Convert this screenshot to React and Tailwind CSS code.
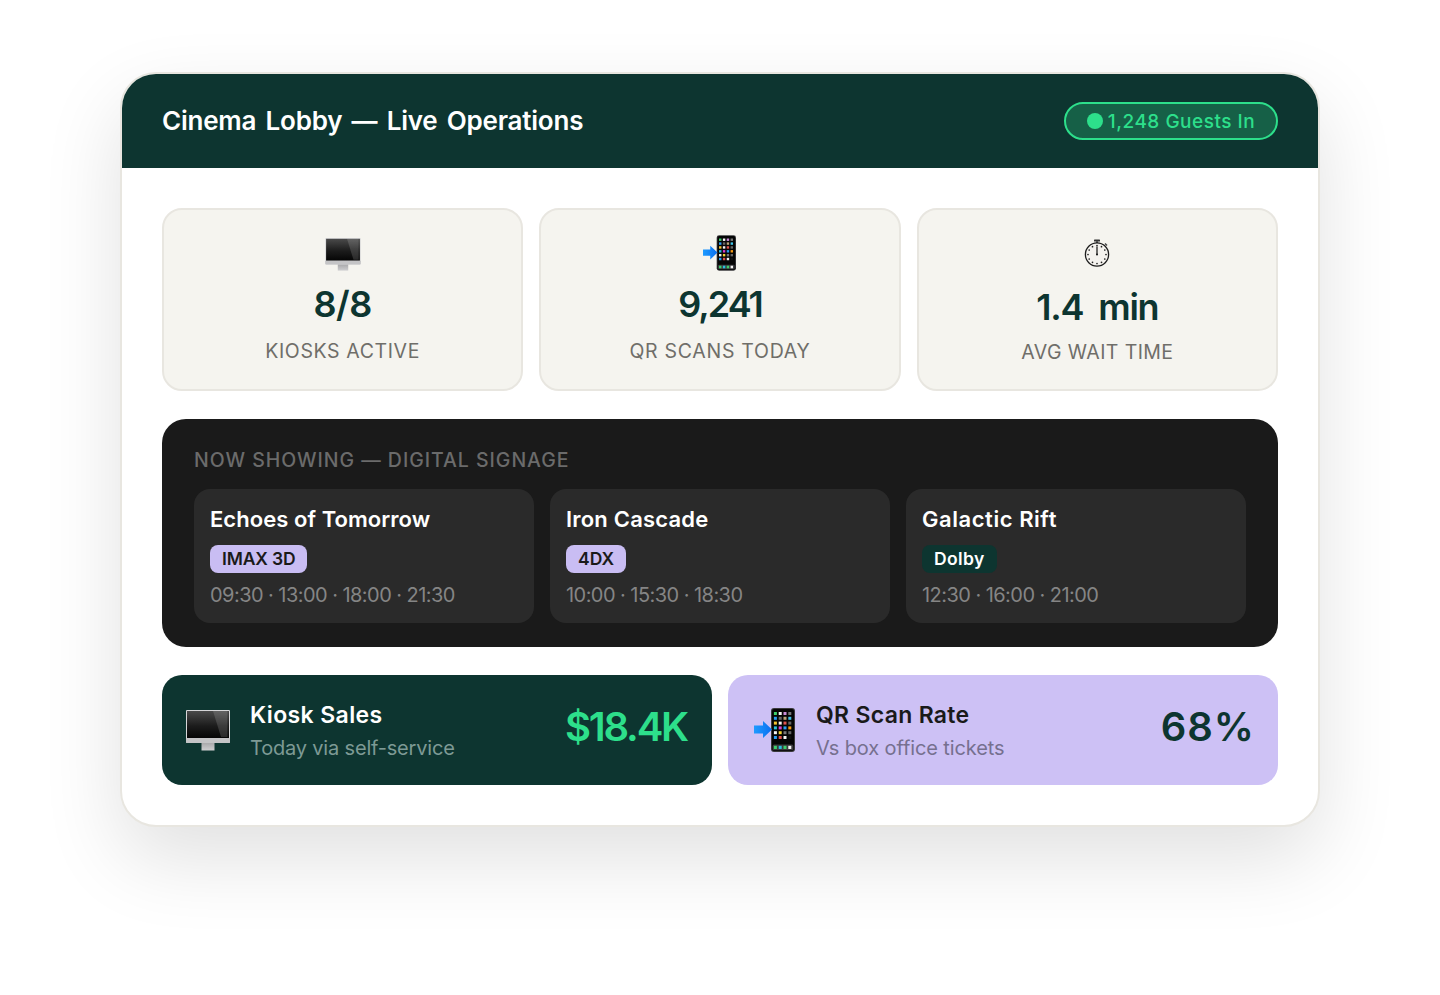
const sans = "font-['Inter','Liberation_Sans',sans-serif]";

function MonitorIcon({ className }) {
  return (
    <svg viewBox="0 0 44 41" className={className}>
      <defs>
        <linearGradient id="screen" x1="0" y1="0" x2="0" y2="1">
          <stop offset="0" stopColor="#4a4a4a" />
          <stop offset="0.55" stopColor="#1c1c1c" />
          <stop offset="1" stopColor="#050505" />
        </linearGradient>
        <linearGradient id="stand" x1="0" y1="0" x2="0" y2="1">
          <stop offset="0" stopColor="#9a9a9c" />
          <stop offset="1" stopColor="#cfcfd1" />
        </linearGradient>
      </defs>
      <rect x="15.5" y="30" width="13" height="10.5" fill="url(#stand)" />
      <rect x="0" y="0" width="44" height="33" rx="1" fill="#d6d6d8" />
      <rect x="0" y="28" width="44" height="5" rx="1" fill="#c4c4c6" />
      <rect x="1" y="1" width="42" height="27" fill="url(#screen)" />
      <path d="M27 1H41.5V27H35Z" fill="#fff" opacity="0.14" />
    </svg>
  );
}

const appColors = [
  "#3ecf6b", "#f5f5f5", "#c88bd8", "#777777",
  "#2a9df4", "#666666", "#b8a47a", "#3fc4e8",
  "#f4c430", "#f5f5f5", "#e0524d", "#666666",
  "#2ac0e0", "#d83fd0", "#2a9df4", "#f59a14",
  "#f5f5f5", "#f4d430", "#777777", "#666666",
  "#2a9df4", "#e0524d", "#f5f5f5", "#111111",
];
const dockColors = ["#3ecf6b", "#2ac0e0", "#3ecf6b", "#f5f5f5"];

function PhoneIcon({ className }) {
  return (
    <svg viewBox="0 0 41 44" className={className}>
      <defs>
        <linearGradient id="arrow" x1="0" y1="0" x2="1" y2="0">
          <stop offset="0" stopColor="#1e9bff" />
          <stop offset="1" stopColor="#0a6ff0" />
        </linearGradient>
      </defs>
      <rect x="17" y="0" width="24" height="44" rx="3" fill="#3a3a3c" />
      <rect x="18" y="1" width="22" height="42" rx="2.2" fill="#050505" />
      {appColors.map((c, i) => (
        <rect key={i} x={19.9 + (i % 4) * 4.8} y={4 + Math.floor(i / 4) * 4.8} width="3" height="3" fill={c} />
      ))}
      <rect x="18.6" y="36.6" width="20.8" height="5.6" rx="1.5" fill="#3a3a3c" />
      {dockColors.map((c, i) => (
        <rect key={i} x={19.9 + i * 4.8} y="37.8" width="3" height="3.2" fill={c} />
      ))}
      <path d="M0 17.5H9V13L18 21.5L9 30V25.5H0Z" fill="url(#arrow)" />
    </svg>
  );
}

function StopwatchIcon({ className }) {
  const ticks = Array.from({ length: 12 }, (_, i) => {
    const a = (i * Math.PI) / 6;
    return [13 + Math.sin(a) * 9, 15.5 - Math.cos(a) * 9];
  });
  return (
    <svg viewBox="0 0 26 28" className={className}>
      <rect x="10" y="0.5" width="6" height="2" rx="0.6" fill="#333" />
      <rect x="12" y="2" width="2" height="2" fill="#555" />
      <path d="M21 4.5L23 6.5" stroke="#444" strokeWidth="1.4" />
      <circle cx="13" cy="15.5" r="11.6" fill="#f4f2ee" stroke="#1d1d1d" strokeWidth="1.3" />
      {ticks.map(([x, y], i) => (
        <circle key={i} cx={x} cy={y} r="0.85" fill="#222" />
      ))}
      <path d="M13 7.5V15.5" stroke="#111" strokeWidth="1.2" />
      <circle cx="13" cy="15.5" r="1" fill="#111" />
    </svg>
  );
}

const stats = [
  { icon: <MonitorIcon className="w-9 h-[33px]" />, box: "h-[48px] pt-[9px]", value: "8/8", valueCls: "tracking-[-0.4px] mt-[5px]", label: "KIOSKS ACTIVE", labelCls: "tracking-[0.62px] mt-[11px]" },
  { icon: <PhoneIcon className="w-[33px] h-9" />, box: "h-[48px] pt-[6px]", value: "9,241", valueCls: "tracking-[-2px] mt-[5px]", label: "QR SCANS TODAY", labelCls: "tracking-[0.72px] mt-[11px]" },
  { icon: <StopwatchIcon className="w-[26px] h-[28px]" />, box: "h-[48px] pt-[10px]", value: "1.4 min", valueCls: "tracking-[-1.2px] [word-spacing:7px] mt-[8px]", label: "AVG WAIT TIME", labelCls: "tracking-[0.4px] mt-[9px]" },
];

const films = [
  { title: "Echoes of Tomorrow", titleCls: "tracking-[0.05px]", tag: "IMAX 3D", tagCls: "bg-[#c9bdf3] text-[#1a1a1a] tracking-[-0.15px]", times: "09:30 · 13:00 · 18:00 · 21:30" },
  { title: "Iron Cascade", titleCls: "tracking-[0.2px]", tag: "4DX", tagCls: "bg-[#c9bdf3] text-[#1a1a1a]", times: "10:00 · 15:30 · 18:30" },
  { title: "Galactic Rift", titleCls: "tracking-[0.55px]", tag: "Dolby", tagCls: "bg-[#0d3530] text-white tracking-[0.4px]", times: "12:30 · 16:00 · 21:00" },
];

export default function App() {
  return (
    <div className={`min-h-screen bg-white flex items-start justify-center pt-[72px] ${sans}`}>
      <div className="w-[1200px] rounded-[36px] border-2 border-[#e8e6e0] bg-white overflow-hidden shadow-[0_32px_80px_rgba(0,0,0,0.12)]">
        <div className="h-[94px] bg-[#0d3530] px-10 flex items-center justify-between">
          <h1 className="text-[26px] leading-[30px] mb-[1px] font-semibold text-white tracking-[-0.22px] [word-spacing:3px]">
            Cinema Lobby — Live Operations
          </h1>
          <div className="h-[38px] w-[214px] rounded-full border-2 border-[#2ddf8b] bg-[#166047] flex items-center justify-center gap-[5px] text-[#2ddf8b] text-[19px] font-medium">
            <span className="w-4 h-4 rounded-full bg-[#2ddf8b]" />
            <span className="tracking-[0.5px] translate-y-[1px]">1,248 Guests In</span>
          </div>
        </div>

        <div className="p-10 flex flex-col gap-7">
          <div className="grid grid-cols-3 gap-4">
            {stats.map((s) => (
              <div key={s.label} className="h-[183px] rounded-[20px] border-2 border-[#e8e6e0] bg-[#f5f4ef] flex flex-col items-center pt-[19px]">
                <div className={`flex justify-center ${s.box}`}>{s.icon}</div>
                <div className={`text-[36px] leading-[44px] font-semibold text-[#0d3530] ${s.valueCls}`}>{s.value}</div>
                <div className={`text-[19.5px] leading-[28px] text-[#6f6e69] ${s.labelCls}`}>{s.label}</div>
              </div>
            ))}
          </div>

          <div className="rounded-[24px] bg-[#1a1a1a] px-8 pt-[27px] pb-6">
            <div className="text-[19.5px] leading-[28px] font-medium text-[#6b6b6b] tracking-[0.97px]">NOW SHOWING — DIGITAL SIGNAGE</div>
            <div className="grid grid-cols-3 gap-4 mt-[15px]">
              {films.map((f) => (
                <div key={f.title} className="h-[134px] rounded-2xl bg-[#2a2a2a] px-4 pt-[16px]">
                  <div className={`text-[22px] leading-[28px] font-semibold text-white ${f.titleCls}`}>{f.title}</div>
                  <div className={`inline-block mt-[12px] h-7 px-3 rounded-lg text-[17.5px] leading-7 font-semibold ${f.tagCls}`}>{f.tag}</div>
                  <div className="mt-[8px] text-[20px] leading-[28px] text-[#858585] tracking-[-0.55px]">{f.times}</div>
                </div>
              ))}
            </div>
          </div>

          <div className="grid grid-cols-2 gap-4">
            <div className="h-[110px] rounded-[20px] bg-[#0d3530] pl-6 pr-[25px] flex items-center">
              <MonitorIcon className="w-11 h-[41px] shrink-0" />
              <div className="ml-5 flex-1 mt-[2px]">
                <div className="text-[23px] leading-[30px] font-semibold text-white tracking-[0.38px]">Kiosk Sales</div>
                <div className="mt-[4px] text-[20px] leading-[28px] text-[#7d9a95] tracking-[-0.18px]">Today via self-service</div>
              </div>
              <div className="text-[40px] leading-[50px] mb-[6px] font-semibold text-[#2ddf8b] tracking-[-2.2px]">$18.4K</div>
            </div>
            <div className="h-[110px] rounded-[20px] bg-[#cdc1f5] pl-[26px] pr-[23px] flex items-center">
              <PhoneIcon className="w-[41px] h-11 shrink-0" />
              <div className="ml-[21px] flex-1 mt-[2px]">
                <div className="text-[23px] leading-[30px] font-semibold text-[#1a1a1a] tracking-[0.3px]">QR Scan Rate</div>
                <div className="mt-[4px] text-[20px] leading-[28px] text-[#76708f] tracking-[-0.12px]">Vs box office tickets</div>
              </div>
              <div className="text-[40px] leading-[50px] mb-[6px] font-semibold text-[#0d3530] tracking-[1px]">68%</div>
            </div>
          </div>
        </div>
      </div>
    </div>
  );
}
